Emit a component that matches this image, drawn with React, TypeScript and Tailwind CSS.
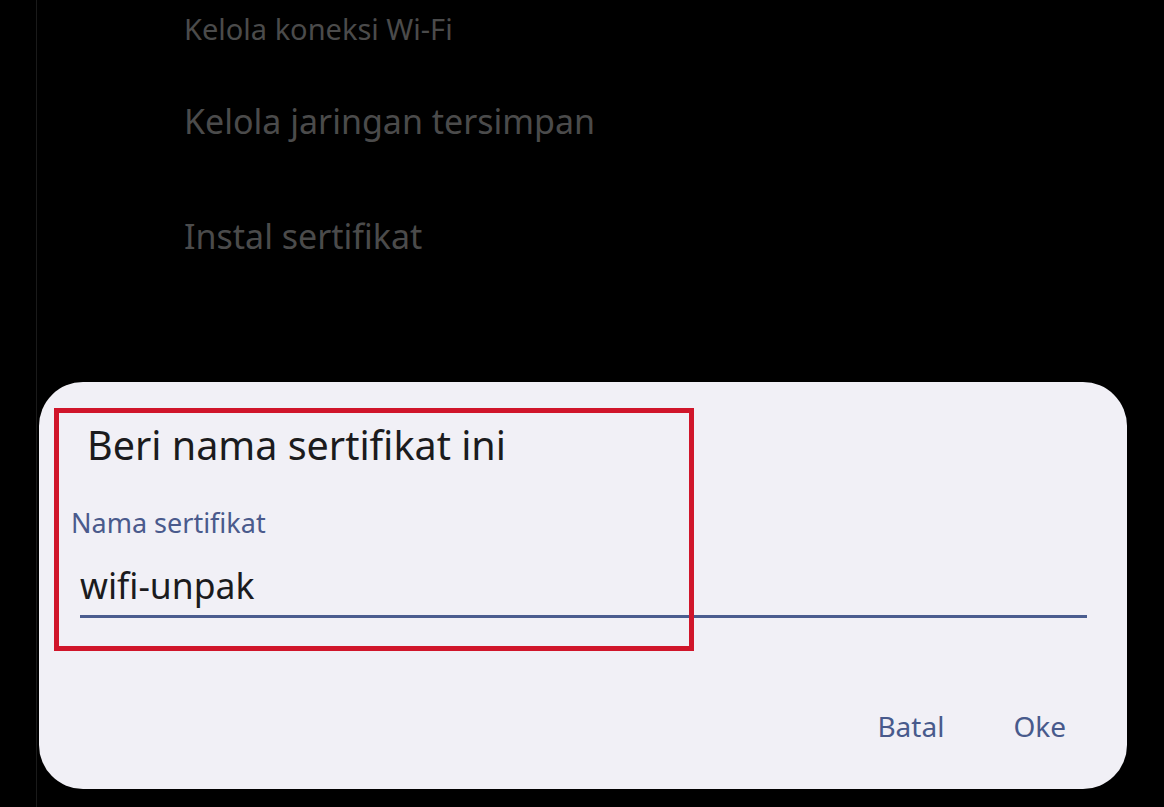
import React from 'react';

const font = { fontFamily: '"Noto Sans", Roboto, sans-serif' };

export default function App() {
  return (
    <div className="h-[807px] w-[1164px] overflow-hidden bg-black" style={font}>
      <div className="ml-[36px] h-full border-l border-[#1a1a1a] pl-[2px]">
        {/* settings list behind the dialog */}
        <div className="pl-[145px] text-[#4b4b4b]">
          <div className="pt-[13px] text-[29px] leading-[32px]">Kelola koneksi Wi-Fi</div>
          <div className="mt-[56px] text-[34px] leading-[40px]">Kelola jaringan tersimpan</div>
          <div className="mt-[75px] text-[34px] leading-[40px]">Instal sertifikat</div>
        </div>

        {/* dialog */}
        <div className="relative mt-[126px] h-[407px] w-[1088px] rounded-[44px] bg-[#f1f0f6]">
          <div className="pl-[48px] pt-[41px] text-[39.5px] leading-[44px] text-[#1b1b1d]">
            Beri nama sertifikat ini
          </div>
          <div className="pl-[32px] pt-[41px] text-[27px] leading-[30px] text-[#4a5a8c]">
            Nama sertifikat
          </div>
          <div className="ml-[41px] mr-[40px] pt-[27px]">
            <div className="text-[35.5px] leading-[40px] text-[#1b1b1d]">wifi-unpak</div>
            <div className="mt-[10px] h-[3px] bg-[#4b5d8f]" />
          </div>
          <div className="flex justify-end gap-[69px] pr-[61px] pt-[91px] text-[28px] leading-[34px] text-[#485a8c]">
            <span>Batal</span>
            <span>Oke</span>
          </div>

          {/* red annotation box */}
          <div className="absolute left-[15px] top-[26px] h-[243px] w-[640px] border-[5px] border-[#d0152a]" />
        </div>
      </div>
    </div>
  );
}
